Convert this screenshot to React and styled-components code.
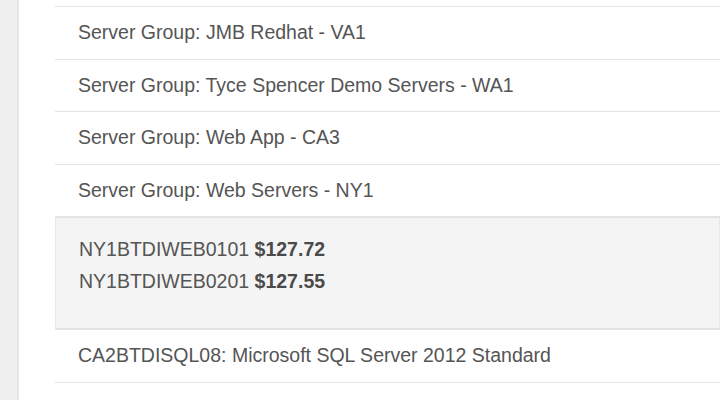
import React from 'react';
import styled, { createGlobalStyle } from 'styled-components';

const GlobalStyle = createGlobalStyle`
  html, body {
    margin: 0;
    padding: 0;
    background: #fff;
    overflow: hidden;
  }
  body {
    font-family: "Liberation Sans", Arial, Helvetica, sans-serif;
    color: #555;
  }
`

const Page = styled.div`
  display: flex;
  height: 400px;
  overflow: hidden;
`

const Sidebar = styled.div`
  width: 17px;
  flex-shrink: 0;
  background: #efefef;
  border-right: 2px solid #e6e6e6;
`

const Main = styled.div`
  flex: 1;
  padding: 6px 0 0 36px;
`

const List = styled.ul`
  list-style: none;
  margin: 0;
  padding: 0;
  border-top: 1px solid #e4e4e4;
`

const Row = styled.li`
  display: flex;
  align-items: center;
  height: 51.5px;
  padding-left: 23px;
  border-bottom: 1px solid #e4e4e4;
  font-size: 19.5px;
  color: #555;
  white-space: nowrap;
`

const Detail = styled.li`
  background: #f4f4f4;
  border: 1px solid #e8e8e8;
  border-bottom: 2px solid #e2e2e2;
  border-top: 1px solid #e2e2e2;
  padding: 15px 0 31px 23px;
  font-size: 19.5px;
  line-height: 32px;
  color: #555;
`

const Line = styled.div`
  white-space: nowrap;
`

const Price = styled.b`
  color: #4a4a4a;
`

const groups = [
  'Server Group: JMB Redhat - VA1',
  'Server Group: Tyce Spencer Demo Servers - WA1',
  'Server Group: Web App - CA3',
  'Server Group: Web Servers - NY1',
];

const servers = [
  { name: 'NY1BTDIWEB0101', price: '$127.72' },
  { name: 'NY1BTDIWEB0201', price: '$127.55' },
];

export default function App() {
  return (
    <>
      <GlobalStyle />
      <Page>
        <Sidebar />
        <Main>
          <List>
            {groups.map((g, i) => (
              <Row key={i}>{g}</Row>
            ))}
            <Detail>
              {servers.map((s, i) => (
                <Line key={i}>
                  {s.name} <Price>{s.price}</Price>
                </Line>
              ))}
            </Detail>
            <Row>CA2BTDISQL08: Microsoft SQL Server 2012 Standard</Row>
            <Row>CA2BTDISQL09: Microsoft SQL Server 2012 Standard</Row>
          </List>
        </Main>
      </Page>
    </>
  );
}
